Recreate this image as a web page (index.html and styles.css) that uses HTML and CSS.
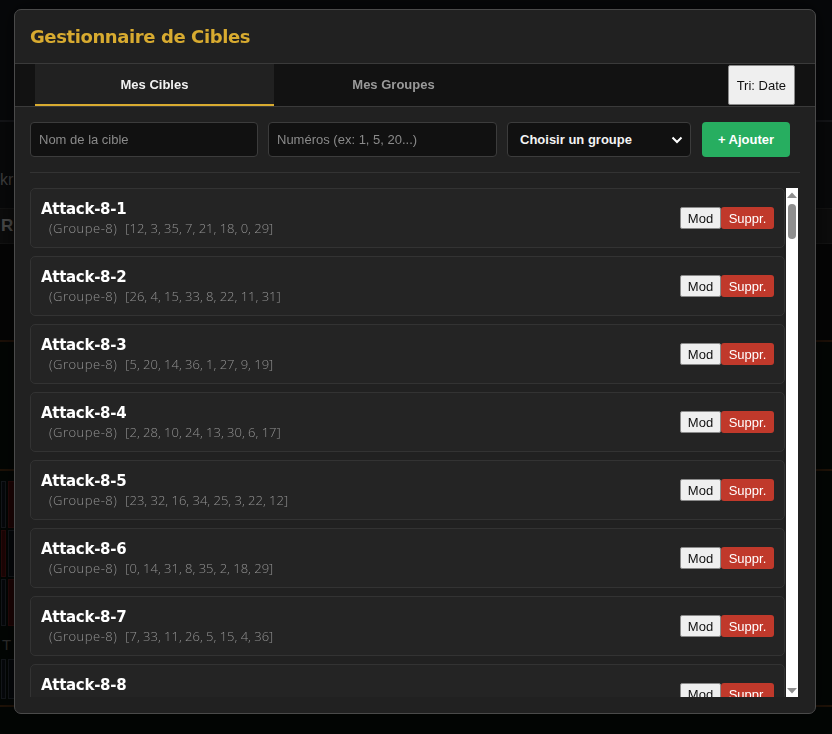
FILE: index.html
```html
<!DOCTYPE html>
<html lang="fr">
  <head>
    <meta charset="UTF-8" />
    <meta name="viewport" content="width=device-width, initial-scale=1.0" />
    <title>Gestionnaire de Cibles</title>
    <link rel="stylesheet" href="styles.css">
  </head>
  <body>
    <!-- page behind the overlay -->
    <div class="page">
      <div class="page-head"></div>
      <div class="page-strip"><span>kr</span></div>
      <div class="page-band"><span>R</span></div>
      <div class="page-empty"></div>
      <div class="page-board">
        <div class="cell"></div><div class="cell red"></div>
        <div class="cell red"></div><div class="cell"></div>
        <div class="cell"></div><div class="cell red"></div>
      </div>
      <div class="page-label">T 1</div>
      <div class="page-board low">
        <div class="cell"></div><div class="cell"></div>
      </div>
    </div>

    <div class="overlay">
      <div class="modal">
        <div class="modal-header">
          <h2>Gestionnaire de Cibles</h2>
        </div>

        <div class="tabs">
          <button class="tab active">Mes Cibles</button>
          <button class="tab">Mes Groupes</button>
          <button class="sort-btn">Tri: Date</button>
        </div>

        <div class="modal-body">
          <div class="add-form">
            <input class="field name-field" type="text" placeholder="Nom de la cible" />
            <input class="field nums-field" type="text" placeholder="Numéros (ex: 1, 5, 20...)" />
            <div class="select-wrap">
              <select class="field group-select">
                <option>Choisir un groupe</option>
              </select>
              <svg class="chevron" width="12" height="8" viewBox="0 0 12 8">
                <path d="M1.5 1.5 L6 6 L10.5 1.5" fill="none" stroke="#fff" stroke-width="2" />
              </svg>
            </div>
            <button class="add-btn">+ Ajouter</button>
          </div>

          <div class="list-wrap">
            <div class="target-list">
              <div class="target">
                <div class="target-info">
                  <div class="target-name">Attack-8-1</div>
                  <div class="target-meta"><span>(Groupe-8)</span><span>[12, 3, 35, 7, 21, 18, 0, 29]</span></div>
                </div>
                <div class="target-actions"><button class="mod-btn">Mod</button><button class="del-btn">Suppr.</button></div>
              </div>
              <div class="target">
                <div class="target-info">
                  <div class="target-name">Attack-8-2</div>
                  <div class="target-meta"><span>(Groupe-8)</span><span>[26, 4, 15, 33, 8, 22, 11, 31]</span></div>
                </div>
                <div class="target-actions"><button class="mod-btn">Mod</button><button class="del-btn">Suppr.</button></div>
              </div>
              <div class="target">
                <div class="target-info">
                  <div class="target-name">Attack-8-3</div>
                  <div class="target-meta"><span>(Groupe-8)</span><span>[5, 20, 14, 36, 1, 27, 9, 19]</span></div>
                </div>
                <div class="target-actions"><button class="mod-btn">Mod</button><button class="del-btn">Suppr.</button></div>
              </div>
              <div class="target">
                <div class="target-info">
                  <div class="target-name">Attack-8-4</div>
                  <div class="target-meta"><span>(Groupe-8)</span><span>[2, 28, 10, 24, 13, 30, 6, 17]</span></div>
                </div>
                <div class="target-actions"><button class="mod-btn">Mod</button><button class="del-btn">Suppr.</button></div>
              </div>
              <div class="target">
                <div class="target-info">
                  <div class="target-name">Attack-8-5</div>
                  <div class="target-meta"><span>(Groupe-8)</span><span>[23, 32, 16, 34, 25, 3, 22, 12]</span></div>
                </div>
                <div class="target-actions"><button class="mod-btn">Mod</button><button class="del-btn">Suppr.</button></div>
              </div>
              <div class="target">
                <div class="target-info">
                  <div class="target-name">Attack-8-6</div>
                  <div class="target-meta"><span>(Groupe-8)</span><span>[0, 14, 31, 8, 35, 2, 18, 29]</span></div>
                </div>
                <div class="target-actions"><button class="mod-btn">Mod</button><button class="del-btn">Suppr.</button></div>
              </div>
              <div class="target">
                <div class="target-info">
                  <div class="target-name">Attack-8-7</div>
                  <div class="target-meta"><span>(Groupe-8)</span><span>[7, 33, 11, 26, 5, 15, 4, 36]</span></div>
                </div>
                <div class="target-actions"><button class="mod-btn">Mod</button><button class="del-btn">Suppr.</button></div>
              </div>
              <div class="target">
                <div class="target-info">
                  <div class="target-name">Attack-8-8</div>
                  <div class="target-meta"><span>(Groupe-8)</span><span>[9, 21, 3, 30, 16, 1, 34, 12]</span></div>
                </div>
                <div class="target-actions"><button class="mod-btn">Mod</button><button class="del-btn">Suppr.</button></div>
              </div>
            </div>

            <!-- list scrollbar -->
            <div class="scrollbar">
              <svg class="arrow" width="10" height="7" viewBox="0 0 10 7"><path d="M0 6 L5 0.5 L10 6 Z" fill="#8f8f8f" /></svg>
              <div class="thumb"></div>
              <svg class="arrow down" width="10" height="7" viewBox="0 0 10 7"><path d="M0 1 L10 1 L5 6.5 Z" fill="#8f8f8f" /></svg>
            </div>
          </div>
        </div>
      </div>
    </div>
  </body>
</html>
```

FILE: styles.css
```css
:root {
  --gold: #d8ab30;
  --modal-bg: #212121;
  --card-bg: #242424;
  --line: #3a3a3a;
  --muted: #939393;
}

body {
  margin: 0;
  background: #030604;
  font-family: "Liberation Sans", Arial, sans-serif;
  overflow: hidden;
}

/* faint page behind the overlay */
.page {
  height: 734px;
}

.page-head {
  height: 120px;
  background: #07080a;
  border-bottom: 2px solid #141518;
}

.page-strip {
  height: 86px;
  background: #08090a;
  color: #3e3e3e;
  font-size: 16px;
  padding-top: 48px;
  box-sizing: border-box;
  line-height: 20px;
}

.page-band {
  height: 34px;
  background: #0c0c0c;
  border-top: 1px solid #131313;
  border-bottom: 1px solid #131313;
  color: #4a4a4a;
  font-weight: bold;
  font-size: 17px;
  line-height: 34px;
  padding-left: 1px;
}

.page-empty {
  height: 225px;
  background: linear-gradient(#050505 0, #050505 96px, #1d1007 96px, #1d1007 98px, #030604 98px);
  border-bottom: 2px solid #1f1207;
}

.page-board {
  display: grid;
  grid-template-columns: 5px 8px;
  gap: 2px;
  padding: 10px 0 0 1px;
}

.page-board.low {
  padding-top: 6px;
  border-bottom: 2px solid #1f1207;
  padding-bottom: 6px;
}

.page-board.low .cell {
  height: 38px;
}

.cell {
  height: 45px;
  background: #06080b;
  border: 1px solid #15181c;
}

.cell.red {
  background: #1d0505;
  border-color: #2a0a0a;
}

.page-label {
  color: #2f2f2f;
  font-size: 15px;
  padding: 10px 0 0 2px;
  letter-spacing: 3px;
}

/* overlay + modal */
.overlay {
  position: fixed;
  inset: 0;
  padding: 9px 0 0 14px;
}

.modal {
  width: 800px;
  height: 703px;
  background: var(--modal-bg);
  border: 1px solid #4a4a4a;
  border-radius: 7px;
  box-shadow: 0 0 20px rgba(0, 0, 0, 0.6);
  display: flex;
  flex-direction: column;
  overflow: hidden;
}

.modal-header {
  padding: 0 15px;
  height: 53px;
  display: flex;
  align-items: center;
  border-bottom: 1px solid var(--line);
}

.modal-header h2 {
  margin: 0;
  color: var(--gold);
  font-family: "DejaVu Sans", sans-serif;
  font-size: 18px;
  font-weight: bold;
  letter-spacing: -0.4px;
}

.tabs {
  display: flex;
  align-items: stretch;
  height: 42px;
  padding: 0 20px;
  background: #121212;
  border-bottom: 1px solid var(--line);
}

.tab {
  width: 239px;
  border: none;
  border-bottom: 2px solid transparent;
  background: transparent;
  color: #9a9a9a;
  font-family: "Liberation Sans", Arial, sans-serif;
  font-size: 13px;
  font-weight: bold;
  cursor: pointer;
}

.tab.active {
  background: var(--modal-bg);
  color: #f2f2f2;
  border-bottom-color: var(--gold);
}

.sort-btn {
  margin: 1px 0 0 auto;
  height: 40px;
  padding: 0 8px;
  background: #efefef;
  color: #111;
  border: 1px solid #8a8a8a;
  border-radius: 2px;
  font-family: "Liberation Sans", Arial, sans-serif;
  font-size: 13px;
}

.modal-body {
  padding: 15px;
  flex: 1;
  display: flex;
  flex-direction: column;
  min-height: 0;
}

.add-form {
  display: flex;
  gap: 10px;
  padding-bottom: 15px;
  border-bottom: 1px solid #333;
}

.field {
  box-sizing: border-box;
  height: 35px;
  padding: 0 8px;
  background: #111;
  border: 1px solid #3c3c3c;
  border-radius: 4px;
  color: #eee;
  font-family: "Liberation Sans", Arial, sans-serif;
  font-size: 13px;
}

.field::placeholder {
  color: #8a8a8a;
}

.name-field {
  width: 228px;
}

.nums-field {
  width: 229px;
}

.select-wrap {
  position: relative;
  width: 184px;
}

.group-select {
  width: 100%;
  appearance: none;
  -webkit-appearance: none;
  padding-left: 12px;
  font-weight: bold;
  color: #f4f4f4;
}

.chevron {
  position: absolute;
  right: 8px;
  top: 14px;
  pointer-events: none;
}

.add-btn {
  margin-left: 1px;
  width: 88px;
  height: 35px;
  border: none;
  border-radius: 4px;
  background: #27ae60;
  color: #fff;
  font-family: "Liberation Sans", Arial, sans-serif;
  font-size: 13px;
  font-weight: bold;
  cursor: pointer;
}

.list-wrap {
  display: flex;
  margin-top: 15px;
  width: 768px;
  height: 509px;
}

.target-list {
  flex: 1;
  overflow: hidden;
}

.scrollbar {
  width: 12px;
  margin-left: 1px;
  background: #fff;
  display: flex;
  flex-direction: column;
  align-items: center;
  padding: 4px 0 3px;
  box-sizing: border-box;
}

.thumb {
  width: 8px;
  height: 35px;
  margin-top: 5px;
  border-radius: 4px;
  background: #8f8f8f;
}

.arrow.down {
  margin-top: auto;
}

.target {
  display: flex;
  align-items: center;
  justify-content: space-between;
  height: 60px;
  box-sizing: border-box;
  padding: 0 10px;
  margin-bottom: 8px;
  background: var(--card-bg);
  border: 1px solid #333;
  border-radius: 5px;
}

.target-name {
  color: #fff;
  font-family: "DejaVu Sans", sans-serif;
  font-size: 15px;
  font-weight: bold;
  line-height: 20px;
  letter-spacing: -0.3px;
}

.target-meta {
  display: flex;
  gap: 8px;
  padding-left: 8px;
  color: var(--muted);
  font-family: "Open Sans", sans-serif;
  font-weight: 300;
  font-size: 13px;
  line-height: 18px;
}

.target-meta span:first-child {
  letter-spacing: 0.5px;
}

.target-actions {
  display: flex;
}

.target-actions button {
  height: 22px;
  font-family: "Liberation Sans", Arial, sans-serif;
  font-size: 13px;
  cursor: pointer;
}

.mod-btn {
  width: 41px;
  background: #efefef;
  color: #111;
  border: 1px solid #8a8a8a;
  border-radius: 2px;
}

.del-btn {
  width: 53px;
  background: #c0392b;
  color: #fff;
  border: none;
  border-radius: 3px;
}
```
